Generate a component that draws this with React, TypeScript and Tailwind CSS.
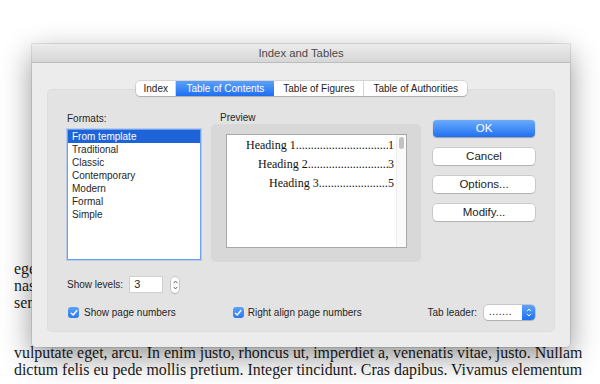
import React from "react";

const formats = ["From template", "Traditional", "Classic", "Contemporary", "Modern", "Formal", "Simple"];

const previewRows = [
    { label: "Heading 1", page: "1", indent: "pl-[19px]" },
    { label: "Heading 2", page: "3", indent: "pl-[31px]" },
    { label: "Heading 3", page: "5", indent: "pl-[42px]" },
];

const tabs = [
    { label: "Index", cls: "px-[7.5px] border-r border-[#d4d4d4]" },
    { label: "Table of Contents", cls: "px-[10px] bg-gradient-to-b from-[#5aa0fa] to-[#1c6ef2] text-white" },
    { label: "Table of Figures", cls: "px-[9px] border-r border-[#d4d4d4]" },
    { label: "Table of Authorities", cls: "px-[9px]" },
];

const ui = "font-['Liberation_Sans',Arial,sans-serif]";

function MacButton({ label, primary }: { label: string; primary?: boolean }) {
    return (
        <div
            className={
                primary
                    ? "h-[17px] rounded-[4px] bg-gradient-to-b from-[#6aabfb] to-[#1e6ff2] text-white text-[11.5px] leading-[17px] text-center shadow-[0_0.5px_1px_rgba(0,0,0,0.3)]"
                    : "h-[17px] rounded-[4px] bg-white text-[#222] text-[11.5px] leading-[17px] text-center shadow-[0_0_0_0.5px_rgba(0,0,0,0.22),0_1px_1px_rgba(0,0,0,0.12)]"
            }
        >
            {label}
        </div>
    );
}

function Check() {
    return (
        <div className="w-[11px] h-[11px] rounded-[3px] bg-gradient-to-b from-[#5ca2f9] to-[#2a77f0] flex items-center justify-center">
            <svg width="8" height="8" viewBox="0 0 8 8">
                <path d="M1.3 4.2 L3.2 6 L6.8 1.6" stroke="white" strokeWidth="1.5" fill="none" strokeLinecap="round" strokeLinejoin="round" />
            </svg>
        </div>
    );
}

export default function App() {
    return (
        <div className="relative w-[600px] h-[384px] bg-white overflow-hidden">
            {/* document behind the sheet */}
            <div className="pl-[14px] pt-[261px] font-['Liberation_Serif','Times_New_Roman',serif] text-[15.9px] leading-[16.8px] text-[#1b1b1b] whitespace-nowrap">
                <div>eget dolor. Aenean massa. Cum sociis natoque penatibus et magnis dis parturient</div>
                <div>nascetur ridiculus mus. Donec quam felis, ultricies nec, pellentesque eu, pretium</div>
                <div>sem. Nulla consequat massa quis enim. Donec pede justo, fringilla vel, aliquet nec,</div>
                <div className="mt-[34px]">vulputate eget, arcu. In enim justo, rhoncus ut, imperdiet a, venenatis vitae, justo. Nullam</div>
                <div>dictum felis eu pede mollis pretium. Integer tincidunt. Cras dapibus. Vivamus elementum</div>
            </div>

            {/* sheet */}
            <div className={`absolute left-[32px] top-[44px] w-[538px] h-[303px] flex flex-col bg-[#ececec] rounded-b-[4px] shadow-[0_10px_30px_rgba(0,0,0,0.42),0_0_0_0.5px_rgba(0,0,0,0.2)] ${ui}`}>
                <div className="h-[19px] shrink-0 rounded-t-[4px] bg-gradient-to-b from-[#ececec] to-[#d6d6d6] border-b border-[#bdbdbd] text-center text-[11.3px] leading-[19px] text-[#4a4a4a]">
                    Index and Tables
                </div>

                <div className="flex flex-col px-[15px] pt-[18px] pb-[15px] flex-1">
                    {/* tabs */}
                    <div className="relative z-10 flex justify-center -mb-[7px] pl-[1px]">
                        <div className="flex h-[15px] rounded-[4px] bg-white shadow-[0_0_0_0.5px_rgba(0,0,0,0.2),0_1px_1px_rgba(0,0,0,0.15)] text-[10px] leading-[15px] text-[#222] overflow-hidden">
                            {tabs.map((t) => (
                                <div key={t.label} className={t.cls}>
                                    {t.label}
                                </div>
                            ))}
                        </div>
                    </div>

                    {/* panel */}
                    <div className="flex-1 rounded-[5px] bg-[#e3e3e3] shadow-[inset_0_0_0_0.5px_rgba(0,0,0,0.05)] pl-[20px] pt-[24px] flex flex-col text-[10px] text-[#262626]">
                        <div className="flex">
                            <div className="w-[134px] flex flex-col">
                                <div className="leading-[12px] mb-[4px]">Formats:</div>
                                <div className="h-[131px] bg-white border border-[#6b9ff0] shadow-[0_0_0_1px_rgba(110,160,240,0.35)] leading-[13px]">
                                    {formats.map((f, i) => (
                                        <div key={f} className={i === 0 ? "bg-[#1f63d8] text-white pl-[4px]" : "pl-[4px]"}>
                                            {f}
                                        </div>
                                    ))}
                                </div>
                            </div>

                            <div className="ml-[10px] w-[210px] flex flex-col">
                                <div className="leading-[12px] pl-[9px] -mt-px">Preview</div>
                                <div className="h-[138px] rounded-[5px] bg-[#d8d8d8] pt-[10px] pl-[15px] pr-[14px]">
                                    <div className="h-[114px] bg-white border border-[#a9a9a9] flex">
                                        <div className="flex-1 min-w-0 pt-[1px] pr-[2px] font-['Liberation_Serif','Times_New_Roman',serif] text-[12px] leading-[19px] text-[#111]">
                                            {previewRows.map((r) => (
                                                <div key={r.label} className={`flex ${r.indent}`}>
                                                    <span className="shrink-0">{r.label}</span>
                                                    <span className="flex-1 min-w-0 overflow-hidden whitespace-nowrap">
                                                        ..........................................................
                                                    </span>
                                                    <span className="shrink-0">{r.page}</span>
                                                </div>
                                            ))}
                                        </div>
                                        <div className="w-[10px] shrink-0 border-l border-[#ececec] bg-[#fafafa] pt-[2px] flex justify-center">
                                            <div className="w-[5px] h-[12px] rounded-full bg-[#c2c2c2]" />
                                        </div>
                                    </div>
                                </div>
                            </div>

                            <div className="ml-[12px] w-[102px] pt-[7px] flex flex-col gap-[11px]">
                                <MacButton label="OK" primary />
                                <MacButton label="Cancel" />
                                <MacButton label="Options..." />
                                <MacButton label="Modify..." />
                            </div>
                        </div>

                        {/* show levels */}
                        <div className="mt-[14px] flex items-center">
                            <span>Show levels:</span>
                            <div className="ml-[6px] w-[34px] h-[17px] bg-white border border-[#cfcfcf] pl-[4px] text-[11px] leading-[15px]">3</div>
                            <div className="ml-[8px] w-[8px] h-[16px] rounded-full bg-white shadow-[0_0_0_0.5px_rgba(0,0,0,0.25),0_1px_1px_rgba(0,0,0,0.1)] flex flex-col items-center justify-center gap-[2px]">
                                <svg width="5" height="4" viewBox="0 0 5 4">
                                    <path d="M0.7 3.2 L2.5 1 L4.3 3.2" stroke="#555" strokeWidth="0.9" fill="none" />
                                </svg>
                                <svg width="5" height="4" viewBox="0 0 5 4">
                                    <path d="M0.7 0.8 L2.5 3 L4.3 0.8" stroke="#555" strokeWidth="0.9" fill="none" />
                                </svg>
                            </div>
                        </div>

                        {/* options row */}
                        <div className="mt-[12px] flex items-center pr-[20px]">
                            <div className="pl-[1px]"><Check /></div>
                            <span className="ml-[5px]">Show page numbers</span>
                            <div className="ml-[57px]"><Check /></div>
                            <span className="ml-[4px]">Right align page numbers</span>
                            <span className="ml-auto mr-[7px]">Tab leader:</span>
                            <div className="w-[51px] h-[15px] rounded-[4px] bg-white shadow-[0_0_0_0.5px_rgba(0,0,0,0.25),0_1px_1px_rgba(0,0,0,0.12)] flex overflow-hidden">
                                <span className="flex-1 pl-[5px] text-[10px] leading-[13px] tracking-[0.5px]">.......</span>
                                <div className="w-[13px] bg-gradient-to-b from-[#5ca2f9] to-[#1e6ff2] flex flex-col items-center justify-center gap-[1px]">
                                    <svg width="6" height="4" viewBox="0 0 6 4">
                                        <path d="M1 3.2 L3 1 L5 3.2" stroke="white" strokeWidth="1" fill="none" />
                                    </svg>
                                    <svg width="6" height="4" viewBox="0 0 6 4">
                                        <path d="M1 0.8 L3 3 L5 0.8" stroke="white" strokeWidth="1" fill="none" />
                                    </svg>
                                </div>
                            </div>
                        </div>
                    </div>
                </div>
            </div>
        </div>
    );
}
